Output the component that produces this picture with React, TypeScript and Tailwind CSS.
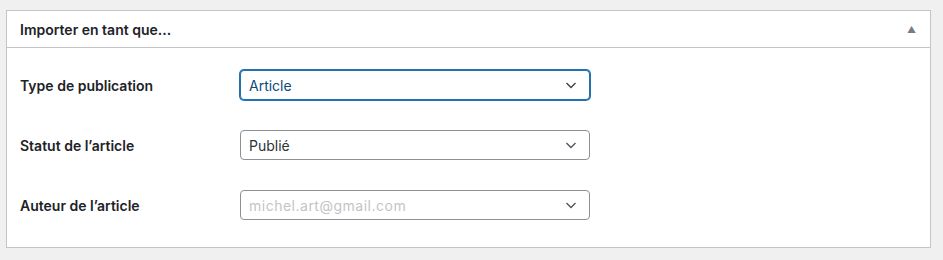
import { ReactNode } from "react";

/* ── rows of the import form ───────────────────────── */
const rows = [
    { label: "Type de publication", value: "Article", focus: true },
    { label: "Statut de l’article", value: "Publié", focus: false },
    { label: "Auteur de l’article", value: "michel.art@gmail.com", focus: false, faded: true },
];

const Chevron = ({ color }: { color: string }) => (
    <svg width="16" height="16" viewBox="0 0 16 16" fill="none">
        <path d="M3.5 6l4.5 4.5L12.5 6" stroke={color} strokeWidth="1.4" />
    </svg>
);

const Select = ({ children, focus, faded }: { children: ReactNode; focus?: boolean; faded?: boolean }) => (
    <div
        className={`w-[350px] h-[30px] flex items-center justify-between pl-2 pr-[10px] rounded-[4px] bg-white border ${focus
                ? "border-[#2271b1] shadow-[0_0_0_1px_#2271b1] text-[#0a4b78]"
                : "border-[#8c8f94] text-[#2c3338]"
            }`}
    >
        <span className={`text-[14px] ${faded ? "text-[#c3c4c7] tracking-[0.5px]" : ""}`}>{children}</span>
        <Chevron color={focus ? "#3c434a" : "#50575e"} />
    </div>
);

export default function App() {
    return (
        <main
            className="w-[943px] h-[260px] bg-[#f0f0f1] pt-[10px] pl-[6px] pr-[12px]"
            style={{ fontFamily: "Inter, 'Noto Sans', sans-serif" }}
        >
            <section className="bg-white border border-[#c3c4c7] h-[238px]">
                {/* header */}
                <div className="h-[37px] border-b border-[#c3c4c7] flex items-center justify-between pl-[13px] pr-[14px]">
                    <h2 className="text-[14px] font-semibold text-[#1d2327]">Importer en tant que...</h2>
                    <span className="text-[#787c82] text-[9px] leading-none">▲</span>
                </div>

                {/* form rows */}
                <div className="pt-[22px] pl-[13px] flex flex-col gap-[30px]">
                    {rows.map((r) => (
                        <div key={r.label} className="flex items-center">
                            <div className="w-[220px] text-[14px] font-semibold text-[#1d2327]">{r.label}</div>
                            <Select focus={r.focus} faded={r.faded}>{r.value}</Select>
                        </div>
                    ))}
                </div>
            </section>
        </main>
    );
}
